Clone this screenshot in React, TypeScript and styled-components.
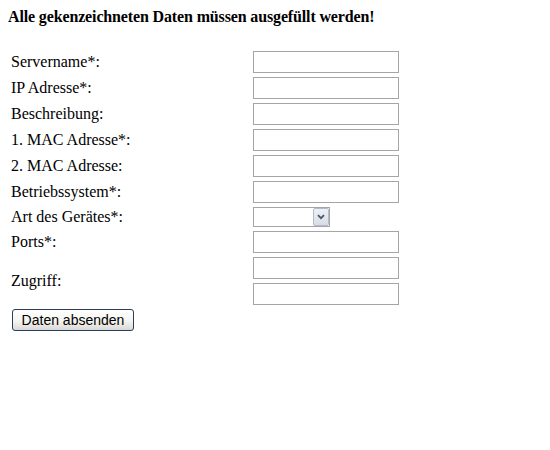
import React from "react"
import styled, { createGlobalStyle } from "styled-components"

const GlobalStyle = createGlobalStyle`
  body {
    margin: 8px;
    background: #fff;
    color: #000;
    font-family: "Liberation Serif", "Times New Roman", serif;
    font-size: 16px;
  }
`

const Title = styled.div`
  font-weight: bold;
  font-size: 16px;
  line-height: 18px;
  letter-spacing: -0.14px;
  margin: 0 0 22px 0;
`

const FormGrid = styled.form`
  display: grid;
  grid-template-columns: 240px 150px;
  gap: 2px;
  padding: 2px;
  width: max-content;
`

const Label = styled.div<{ $span?: number }>`
  padding: 1px;
  display: flex;
  align-items: center;
  line-height: 18px;
  grid-row: ${(p) => (p.$span ? `span ${p.$span}` : "auto")};
`

const Cell = styled.div`
  padding: 1px;
  display: flex;
  align-items: center;
`

const FieldStack = styled.div`
  display: flex;
  flex-direction: column;
  gap: 4px;
  padding: 1px;
`

const TextInput = styled.input.attrs({ type: "text" })`
  box-sizing: border-box;
  display: block;
  width: 146px;
  height: 22px;
  margin: 0;
  padding: 1px 2px;
  border: 1px solid #a5a5a5;
  background: #fff;
  font-family: "Liberation Sans", Arial, sans-serif;
  font-size: 13px;
  &:focus {
    outline: none;
  }
`

const SelectWrap = styled.div`
  position: relative;
  width: 77px;
  height: 20px;
`

const Select = styled.select`
  box-sizing: border-box;
  appearance: none;
  width: 100%;
  height: 100%;
  margin: 0;
  border: 1px solid #a5a5a5;
  border-radius: 0;
  background: #fff;
  font-family: "Liberation Sans", Arial, sans-serif;
  font-size: 13px;
  &:focus {
    outline: none;
  }
`

const ArrowBox = styled.span`
  position: absolute;
  top: 1px;
  right: 1px;
  bottom: 1px;
  width: 16px;
  box-sizing: border-box;
  border: 1px solid #b4bccb;
  border-radius: 2px;
  background: linear-gradient(#eef1f6, #d7dce6);
  display: flex;
  align-items: center;
  justify-content: center;
  pointer-events: none;
`

const ButtonRow = styled.div`
  padding: 1px 0 0 4px;
`

const SubmitButton = styled.button`
  box-sizing: border-box;
  width: 122px;
  height: 22px;
  padding: 0;
  border: 1px solid #2c3d57;
  border-radius: 3px;
  background: linear-gradient(#ffffff 0%, #f4f4f0 55%, #e4e2da 85%, #d3d7e2 100%);
  color: #000;
  font-family: "Liberation Sans", Tahoma, Arial, sans-serif;
  font-size: 14px;
  line-height: 18px;
  cursor: pointer;
`

const fields = [
  "Servername*:",
  "IP Adresse*:",
  "Beschreibung:",
  "1. MAC Adresse*:",
  "2. MAC Adresse:",
  "Betriebssystem*:",
]

export default function App() {
  return (
    <>
      <GlobalStyle />
      <Title>Alle gekenzeichneten Daten müssen ausgefüllt werden!</Title>
      <FormGrid onSubmit={(e) => e.preventDefault()}>
        {fields.map((f) => (
          <React.Fragment key={f}>
            <Label>{f}</Label>
            <Cell>
              <TextInput />
            </Cell>
          </React.Fragment>
        ))}
        <Label>Art des Gerätes*:</Label>
        <Cell>
          <SelectWrap>
            <Select defaultValue="">
              <option value=""></option>
            </Select>
            <ArrowBox>
              <svg width="8" height="6" viewBox="0 0 8 6">
                <path d="M1 1.2 L4 4.2 L7 1.2" fill="none" stroke="#4a5670" strokeWidth="1.8" />
              </svg>
            </ArrowBox>
          </SelectWrap>
        </Cell>
        <Label>Ports*:</Label>
        <Cell>
          <TextInput />
        </Cell>
        <Label $span={1}>Zugriff:</Label>
        <FieldStack>
          <TextInput />
          <TextInput />
        </FieldStack>
      </FormGrid>
      <ButtonRow>
        <SubmitButton type="submit">Daten absenden</SubmitButton>
      </ButtonRow>
    </>
  )
}
